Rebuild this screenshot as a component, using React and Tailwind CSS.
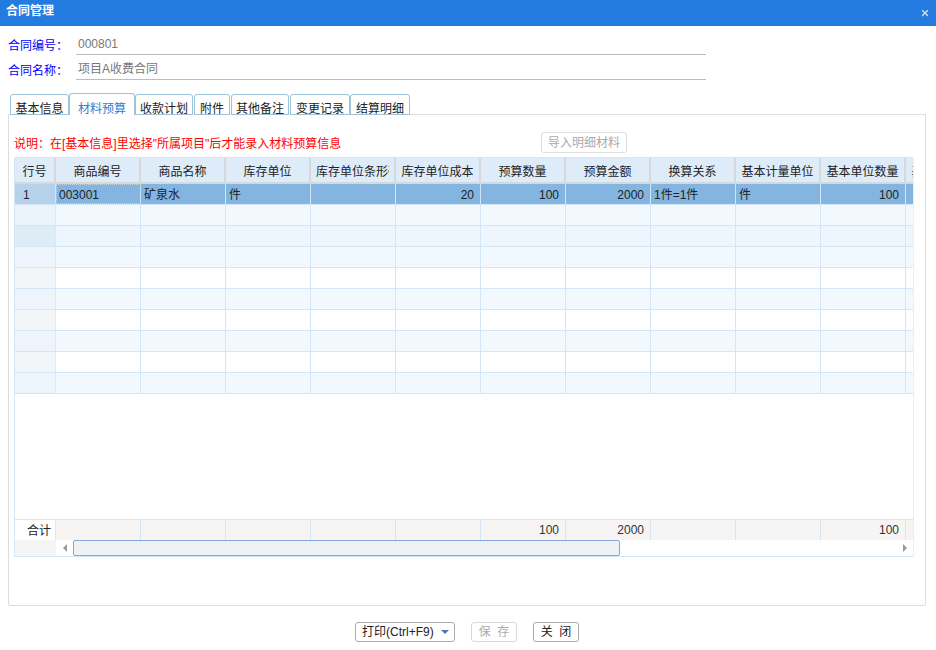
import React from 'react';
import { X } from 'lucide-react';

const tabs = [
  { name: '基本信息', w: 'w-[59px]' },
  { name: '材料预算', w: 'w-[66px]', active: true },
  { name: '收款计划', w: 'w-[58px]' },
  { name: '附件', w: 'w-[36px] ml-[1px]' },
  { name: '其他备注', w: 'w-[58px] ml-[1px]' },
  { name: '变更记录', w: 'w-[60px] ml-[1px]' },
  { name: '结算明细', w: 'w-[60px]' },
];

const columns = ['商品编号', '商品名称', '库存单位', '库存单位条形码', '库存单位成本', '预算数量', '预算金额', '换算关系', '基本计量单位', '基本单位数量', '基本单位成本'];

const firstRow = [
  { v: '003001', focus: true },
  { v: '矿泉水' },
  { v: '件' },
  { v: '' },
  { v: '20', right: true },
  { v: '100', right: true },
  { v: '2000', right: true },
  { v: '1件=1件' },
  { v: '件' },
  { v: '100', right: true },
  { v: '' },
];

const totals = ['', '', '', '', '', '100', '2000', '', '', '100', ''];

// row tints as they appear in the grid, top to bottom
const emptyRows = [
  { num: 'bg-[#ebf3fb]', cell: 'bg-[#f1f8fe]' },
  { num: 'bg-[#dcedf5]', cell: 'bg-[#edf6fd]' },
  { num: 'bg-[#edf4fb]', cell: 'bg-[#f1f8fe]' },
  { num: 'bg-[#f3f6f8]', cell: 'bg-white' },
  { num: 'bg-[#edf4fb]', cell: 'bg-[#f1f8fe]' },
  { num: 'bg-[#f3f6f8]', cell: 'bg-white' },
  { num: 'bg-[#edf4fb]', cell: 'bg-[#f1f8fe]' },
  { num: 'bg-[#f3f6f8]', cell: 'bg-white' },
  { num: 'bg-[#edf4fb]', cell: 'bg-[#f1f8fe]' },
];

function InfoRow({ label, value }) {
  return (
    <div className="flex items-end h-[25px]">
      <span className="w-[68px] text-[12px] leading-[18px] text-[#0000ff]">{label}</span>
      <span className="w-[630px] h-[25px] border-b border-[#bbbbbb] pl-[2px] text-[12px] leading-[28px] text-[#777777]">{value}</span>
    </div>
  );
}

function Tabs() {
  return (
    <div className="flex items-end pl-[2px] h-[22px] -mb-px relative z-10">
      {tabs.map((t) => (
        <div
          key={t.name}
          className={
            t.active
              ? `${t.w} h-[22px] bg-white border border-b-0 border-[#9cc3da] rounded-t-[3px] text-center text-[12px] leading-[30px] text-[#2a7fd4]`
              : `${t.w} h-[21px] bg-white border border-[#9cc3da] rounded-t-[3px] text-center text-[12px] leading-[28px] text-[#222222]`
          }
        >
          {t.name}
        </div>
      ))}
    </div>
  );
}

function GridHeader() {
  return (
    <div className="flex h-[26px] shrink-0 bg-[#deebf9] border-b-2 border-[#d5d9dc]">
      <div className="w-[41px] shrink-0 border-r-2 border-[#d5d9dc] pt-[4px] text-center text-[12px] leading-[20px] text-[#222222]">行号</div>
      {columns.map((c) => (
        <div key={c} className="w-[85px] shrink-0 border-r-2 border-[#d5d9dc] pt-[4px] text-[12px] leading-[20px] text-[#222222]">
          <span className="block mx-[5px] overflow-hidden whitespace-nowrap text-center">{c}</span>
        </div>
      ))}
    </div>
  );
}

function SelectedRow() {
  return (
    <div className="flex h-[21px] shrink-0 bg-[#84b5e0] border-b border-[#d2e6f7]">
      <div className="w-[41px] shrink-0 bg-[#b6d2eb] border-r border-[#d2e6f7] pl-[8px] text-[12px] leading-[22px] text-[#222222]">1</div>
      {firstRow.map((c, i) => (
        <div
          key={i}
          className={`w-[85px] shrink-0 border-r border-[#d2e6f7] text-[12px] leading-[22px] text-[#222222] ${c.right ? 'text-right pr-[6px]' : 'pl-[3px]'} ${c.focus ? 'outline-1 -outline-offset-1 outline-dotted outline-[#c9d6e2]' : ''}`}
        >
          {c.v}
        </div>
      ))}
    </div>
  );
}

function EmptyRow({ row }) {
  return (
    <div className={`flex h-[21px] shrink-0 border-b border-[#d2e6f7] ${row.cell}`}>
      <div className={`w-[41px] shrink-0 border-r border-[#dde9f2] ${row.num}`} />
      {columns.map((c) => (
        <div key={c} className="w-[85px] shrink-0 border-r border-[#d2e6f7]" />
      ))}
    </div>
  );
}

function TotalRow() {
  return (
    <div className="flex h-[21px] shrink-0 bg-[#f6f5f3] border-t border-[#d2e6f7]">
      <div className="w-[41px] shrink-0 bg-white border-r border-[#dde9f2] pl-[12px] text-[12px] leading-[22px] text-[#222222]">合计</div>
      {totals.map((v, i) => (
        <div key={i} className="w-[85px] shrink-0 border-r border-[#d2e6f7] pr-[6px] text-right text-[12px] leading-[21px] text-[#333333]">{v}</div>
      ))}
    </div>
  );
}

function ScrollBar() {
  return (
    <div className="flex h-[16px] shrink-0 bg-white">
      <div className="w-[41px] shrink-0 bg-[#f3f5f7]" />
      <div className="w-[17px] shrink-0 flex items-center justify-center">
        <span className="w-0 h-0 border-y-[4px] border-y-transparent border-r-[4px] border-r-[#9a9a9a]" />
      </div>
      <div className="w-[547px] shrink-0 bg-[#eef2f5] border border-[#8aa5dc] rounded-[2px]" />
      <div className="flex-1 flex items-center justify-end pr-[6px]">
        <span className="w-0 h-0 border-y-[4px] border-y-transparent border-l-[4px] border-l-[#9a9a9a]" />
      </div>
    </div>
  );
}

function Grid() {
  return (
    <div className="mx-[5px] h-[400px] w-[900px] flex flex-col overflow-hidden border border-[#d2e6f7] border-r-[#e4f0fa] rounded-t-[2px]">
      <GridHeader />
      <SelectedRow />
      {emptyRows.map((r, i) => (
        <EmptyRow key={i} row={r} />
      ))}
      <div className="flex-1" />
      <TotalRow />
      <ScrollBar />
    </div>
  );
}

function FooterButton({ children, disabled, w }) {
  return (
    <div className={`${w} h-[20px] flex items-center justify-center bg-white border rounded-[3px] text-[12px] ${disabled ? 'border-[#d9d9d9] text-[#aaaaaa]' : 'border-[#aaaaaa] text-[#222222]'}`}>
      {children}
    </div>
  );
}

export default function App() {
  return (
    <div className="w-[936px] h-[650px] bg-white overflow-hidden font-['Liberation_Sans','Noto_Sans_CJK_SC',sans-serif]">
      <div className="h-[26px] bg-[#247bdf] flex items-center justify-between pl-[6px] pr-[6px]">
        <span className="text-[12px] font-bold text-white leading-[20px] -mt-[5px]">合同管理</span>
        <X size={10} strokeWidth={3} className="text-[#d5e2f2]" />
      </div>

      <div className="pl-[8px] pt-[4px]">
        <InfoRow label="合同编号：" value="000801" />
        <InfoRow label="合同名称：" value="项目A收费合同" />
      </div>

      <div className="ml-[8px] w-[918px] mt-[13px]">
        <Tabs />
        <div className="h-[492px] border border-[#dddddd] rounded-b-[2px] bg-white">
          <div className="flex items-center h-[42px] pt-[15px] pl-[5px]">
            <span className="w-[527px] text-[12px] text-[#ff0000] whitespace-nowrap">说明：在[基本信息]里选择"所属项目"后才能录入材料预算信息</span>
            <div className="w-[86px] h-[21px] mb-[2px] flex items-center justify-center border border-[#dddddd] rounded-[3px] text-[12px] text-[#aaaaaa]">导入明细材料</div>
          </div>
          <Grid />
        </div>
      </div>

      <div className="flex justify-center items-center gap-[16px] mt-[16px] pr-[2px]">
        <div className="w-[100px] h-[20px] flex items-center justify-between bg-white border border-[#aaaaaa] rounded-[3px] pl-[6px] pr-[5px] text-[12px] text-[#222222]">
          <span>打印(Ctrl+F9)</span>
          <span className="w-0 h-0 border-x-[4px] border-x-transparent border-t-[4px] border-t-[#4a76c0]" />
        </div>
        <FooterButton disabled w="w-[46px]">保{'\u00a0\u00a0'}存</FooterButton>
        <FooterButton w="w-[46px]">关{'\u00a0\u00a0'}闭</FooterButton>
      </div>
    </div>
  );
}
